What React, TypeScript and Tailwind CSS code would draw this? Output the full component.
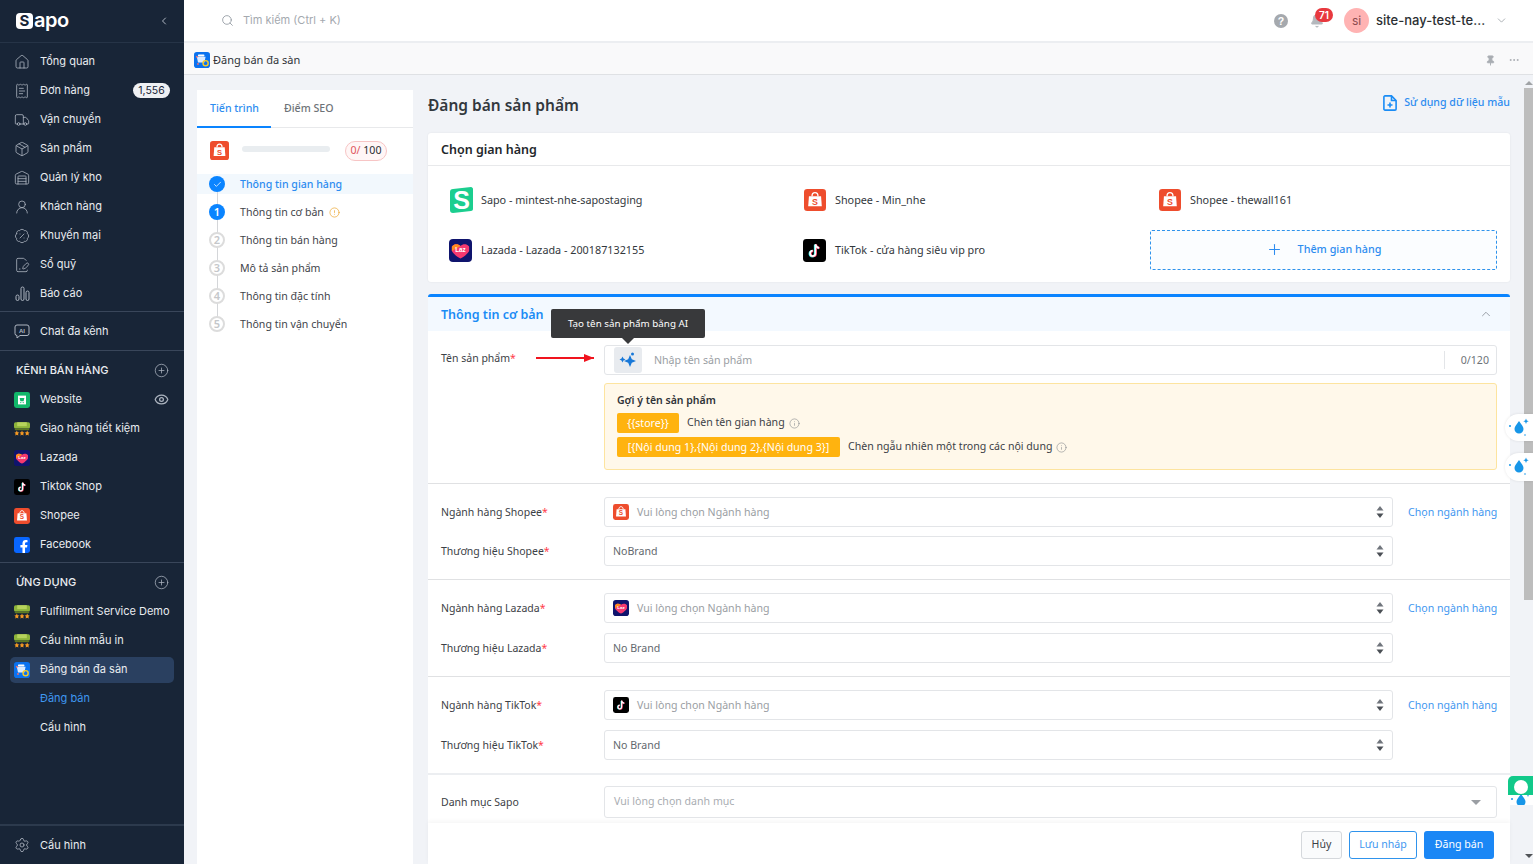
import React from "react";
import { Home, ReceiptText, Truck, Package, Warehouse, UserRound, BadgePercent, FilePenLine, CirclePlus, Eye, ChevronLeft, ChevronDown, ChevronUp, Search, Settings, Check, CircleAlert, Info, Plus, Pin, Ellipsis, Bell } from "lucide-react";

const Shopee = ({ s = 16 }: { s?: number }) => (
  <svg width={s} height={s} viewBox="0 0 20 20" className="shrink-0">
    <rect width="20" height="20" rx="3" fill="#ee4d2d" />
    <path d="M4.500 6.500h11l.7 9.200H3.800z" fill="#fff" />
    <path d="M7.300 6.500c0-4.200 5.400-4.200 5.400 0" fill="none" stroke="#fff" strokeWidth="1.200" />
    <text x="10" y="14.300" textAnchor="middle" fontSize="8" fontWeight="700" fill="#ee4d2d" fontFamily="Liberation Sans, sans-serif">S</text>
  </svg>
);
const Lazada = ({ s = 16 }: { s?: number }) => (
  <svg width={s} height={s} viewBox="0 0 20 20" className="shrink-0">
    <rect width="20" height="20" rx="3.500" fill="#0f146d" />
    <path d="M2.500 6.500C5 3.800 8 4.400 10 6c2-1.600 5-2.200 7.500.5v3.700c0 1.500-5 5.800-7.500 6.800-2.500-1-7.500-5.300-7.500-6.800z" fill="#f5386f" />
    <path d="M2.500 6.500C5 3.800 8 4.400 10 6l-7.500 4.500z" fill="#ff8a1e" />
    <text x="10" y="11.600" textAnchor="middle" fontSize="5.500" fontWeight="700" fill="#fff" fontFamily="Liberation Sans, sans-serif">Laz</text>
  </svg>
);
const TikTok = ({ s = 16 }: { s?: number }) => (
  <svg width={s} height={s} viewBox="0 0 20 20" className="shrink-0">
    <rect width="20" height="20" rx="3" fill="#000" />
    <path d="M10.800 4.500v8a2.300 2.300 0 1 1-2.300-2.300M10.800 4.500c.2 1.800 1.400 3 3.200 3.200" fill="none" stroke="#25f4ee" strokeWidth="1.700" transform="translate(-.5 .4)" />
    <path d="M10.800 4.500v8a2.300 2.300 0 1 1-2.300-2.300M10.800 4.500c.2 1.800 1.400 3 3.200 3.200" fill="none" stroke="#fe2c55" strokeWidth="1.700" transform="translate(.5 .2)" />
    <path d="M10.800 4.500v8a2.300 2.300 0 1 1-2.300-2.300M10.800 4.500c.2 1.800 1.400 3 3.200 3.200" fill="none" stroke="#fff" strokeWidth="1.500" />
  </svg>
);
const Facebook = () => (
  <svg width="16" height="16" viewBox="0 0 20 20" className="shrink-0">
    <rect width="20" height="20" rx="3" fill="#0866ff" />
    <path d="M13.800 20v-7h2.500l.5-3h-3V8.200c0-1 .5-1.700 1.800-1.700h1.300V4c-.7-.1-1.500-.2-2.300-.2-2.500 0-4 1.500-4 4.100V10H8v3h2.600v7z" fill="#fff" />
  </svg>
);
const WebsiteIc = () => (
  <svg width="16" height="16" viewBox="0 0 20 20" className="shrink-0">
    <rect width="20" height="20" rx="3" fill="#12b76a" />
    <path d="M5 4.500h10v11H5z" fill="#fff" />
    <path d="M7 7.500h6l-1 4H8z" fill="#12b76a" />
    <circle cx="8.500" cy="13.200" r=".8" fill="#12b76a" />
    <circle cx="11.500" cy="13.200" r=".8" fill="#12b76a" />
  </svg>
);
const Ghtk = () => (
  <svg width="16" height="14" viewBox="0 0 20 17" className="shrink-0">
    <rect x="0" y="0" width="20" height="8" rx="2" fill="#8db43a" />
    <rect x="4" y="0" width="12" height="5" fill="#b6d35c" />
    <rect x="1" y="8" width="18" height="2" fill="#5c7a22" />
    <path d="M3.500 10.500l1 2.200 2 .2-1.500 1.500.5 2.200-2-1-2 1 .5-2.200L.5 12.900l2-.2zM10 10.500l1 2.200 2 .2-1.500 1.500.5 2.200-2-1-2 1 .5-2.200-1.500-1.500 2-.2zM16.500 10.500l1 2.200 2 .2-1.500 1.500.5 2.200-2-1-2 1 .5-2.200-1.500-1.500 2-.2z" fill="#f59a23" />
  </svg>
);
const MultiIc = ({ s = 16 }: { s?: number }) => (
  <svg width={s} height={s} viewBox="0 0 20 20" className="shrink-0">
    <rect width="20" height="20" rx="3.500" fill="#0a72ef" />
    <path d="M3.500 6h11l-1.500 7H5z" fill="#dbeafe" />
    <rect x="5" y="3" width="8" height="2.500" rx=".8" fill="#fff" />
    <circle cx="3.500" cy="6" r="1.200" fill="#f06b6b" />
    <circle cx="5" cy="15" r="1.200" fill="#f06b6b" />
    <circle cx="14.500" cy="14" r="3.200" fill="none" stroke="#f7c927" strokeWidth="1.800" />
  </svg>
);
const SapoS = () => (
  <svg width="24" height="26" viewBox="0 0 24 26" className="shrink-0">
    <path d="M4 2 22 0c1 0 2 1 2 2v20c0 1-1 2-2 2L4 26c-2 0-3-1-3-3V5c0-2 1-3 3-3z" fill="#1bce8f" />
    <text x="12.500" y="21.500" textAnchor="middle" fontSize="25" fontWeight="700" fill="#fff" fontFamily="Liberation Sans, sans-serif">S</text>
  </svg>
);
const Bars = () => (
  <svg width="15" height="15" viewBox="0 0 15 15" fill="none" stroke="currentColor" strokeWidth="1">
    <rect x="1" y="9" width="3" height="5.500" rx="1.500" />
    <rect x="6" y="1" width="3" height="13.500" rx="1.500" />
    <rect x="11" y="5" width="3" height="9.500" rx="1.500" />
  </svg>
);
const AiChat = () => (
  <svg width="16" height="15" viewBox="0 0 16 15" fill="none" stroke="currentColor" strokeWidth="1">
    <path d="M3 1h10a2 2 0 0 1 2 2v6.500a2 2 0 0 1-2 2H6l-3 2.500v-2.500a2 2 0 0 1-2-2V3a2 2 0 0 1 2-2z" />
    <text x="8" y="8.800" textAnchor="middle" fontSize="6" fontWeight="700" fill="currentColor" stroke="none" fontFamily="Liberation Sans, sans-serif">AI</text>
  </svg>
);
const Help = () => (
  <svg width="14" height="14" viewBox="0 0 14 14" className="shrink-0">
    <circle cx="7" cy="7" r="7" fill="#a5a9ae" />
    <text x="7" y="10.800" textAnchor="middle" fontSize="10.500" fontWeight="700" fill="#fff" fontFamily="Liberation Sans, sans-serif">?</text>
  </svg>
);
const DocPlus = () => (
  <svg width="14" height="16" viewBox="0 0 14 16" fill="none" stroke="#1a8cf5" strokeWidth="1.600" className="mr-[7px] shrink-0">
    <path d="M2 .9h6.500l4.600 4.600V14a1.100 1.100 0 0 1-1.100 1.100H2A1.100 1.100 0 0 1 .9 14V2A1.100 1.100 0 0 1 2 .9z" />
    <path d="M8.500 1v4.500h4.500" />
    <path d="M7 7.500v5M4.500 10h5" />
  </svg>
);
const Drop = () => (
  <svg width="26" height="22" viewBox="0 0 26 22">
    <path d="M13 4c2.500 3.500 4.500 5.500 4.500 8a4.500 4.500 0 0 1-9 0c0-2.500 2-4.500 4.500-8z" fill="#1796e8" />
    <path d="M20 1.500l.8 1.900 1.900.8-1.900.8-.8 1.900-.8-1.900-1.900-.8 1.900-.8z" fill="#1796e8" />
    <circle cx="4" cy="9" r="1" fill="#1796e8" />
    <circle cx="19" cy="18" r=".8" fill="#1796e8" />
  </svg>
);
const Updown = () => (
  <svg width="8" height="14" viewBox="0 0 8 14" className="shrink-0">
    <path d="M4 1l3.500 4.500h-7z" fill="#70757c" />
    <path d="M4 13L.5 8.500h7z" fill="#4a4f55" />
  </svg>
);
const Req = () => <span className="text-[#ff3b4a]">*</span>;

const Nav = ({ icon, label, right, active, blue }: { icon?: React.ReactNode; label: string; right?: React.ReactNode; active?: boolean; blue?: boolean }) => (
  <div className="h-[29px] px-[10px] flex items-center">
    <div className={`flex-1 h-[26px] rounded-[5px] pl-[4px] pr-[4px] flex items-center gap-[10px] ${active ? "bg-[#2a4060]" : ""}`}>
      <span className="w-[16px] flex justify-center shrink-0 text-[#aeb6c1]">{icon}</span>
      <span className={`flex-1 whitespace-nowrap ${blue ? "text-[#3f97f0]" : "text-[#e9ecf0]"}`}>{label}</span>
      {right}
    </div>
  </div>
);
const ic = { size: 16, strokeWidth: 1.2 };

const SectionHead = ({ label }: { label: string }) => (
  <div className="h-[29px] pl-[16px] pr-[15px] flex items-center justify-between">
    <span className="font-medium text-[#e9ecf0]">{label}</span>
    <CirclePlus size={15} strokeWidth={1.2} className="text-[#aeb6c1]" />
  </div>
);

const Sidebar = () => (
  <aside className="w-[184px] h-full shrink-0 bg-[#182537] flex flex-col text-[11px] font-[Inter,sans-serif]">
    <div className="h-[43px] shrink-0 border-b border-[#263447] pl-[16px] pr-[14px] flex items-center justify-between">
      <div className="flex items-center">
        <span className="w-[17px] h-[16px] rounded-[4px] bg-white text-[#182537] text-[15px] font-bold leading-[16px] text-center">S</span>
        <span className="text-white text-[20px] font-semibold leading-none ml-[1px] tracking-[-0.5px] -mt-[2px]">apo</span>
      </div>
      <ChevronLeft size={12} strokeWidth={2} className="text-[#aeb6c1]" />
    </div>
    <div className="pt-[4px] pb-[3px] border-b border-[#39465a]">
      <Nav icon={<Home {...ic} />} label="Tổng quan" />
      <Nav icon={<ReceiptText {...ic} />} label="Đơn hàng" right={<span className="w-[37px] h-[15px] rounded-full bg-[#eef0f3] text-[#182537] text-[10.5px] leading-[15px] text-center">1,556</span>} />
      <Nav icon={<Truck {...ic} />} label="Vận chuyển" />
      <Nav icon={<Package {...ic} />} label="Sản phẩm" />
      <Nav icon={<Warehouse {...ic} />} label="Quản lý kho" />
      <Nav icon={<UserRound {...ic} />} label="Khách hàng" />
      <Nav icon={<BadgePercent {...ic} />} label="Khuyến mại" />
      <Nav icon={<FilePenLine {...ic} />} label="Sổ quỹ" />
      <Nav icon={<Bars />} label="Báo cáo" />
    </div>
    <div className="pt-[5px] pb-[4px] border-b border-[#39465a]">
      <Nav icon={<AiChat />} label="Chat đa kênh" />
    </div>
    <div className="pt-[5px] pb-[3px] border-b border-[#39465a]">
      <SectionHead label="KÊNH BÁN HÀNG" />
      <Nav icon={<WebsiteIc />} label="Website" right={<Eye size={15} strokeWidth={2} className="text-[#aeb6c1] mr-[1px]" />} />
      <Nav icon={<Ghtk />} label="Giao hàng tiết kiệm" />
      <Nav icon={<Lazada />} label="Lazada" />
      <Nav icon={<TikTok />} label="Tiktok Shop" />
      <Nav icon={<Shopee />} label="Shopee" />
      <Nav icon={<Facebook />} label="Facebook" />
    </div>
    <div className="pt-[5px] flex-1">
      <SectionHead label="ỨNG DỤNG" />
      <Nav icon={<Ghtk />} label="Fulfillment Service Demo" />
      <Nav icon={<Ghtk />} label="Cấu hình mẫu in" />
      <Nav icon={<MultiIc />} label="Đăng bán đa sàn" active />
      <Nav label="Đăng bán" blue />
      <Nav label="Cấu hình" />
    </div>
    <div className="h-[40px] shrink-0 border-t-2 border-[#2c3a4d] flex items-center">
      <div className="flex-1"><Nav icon={<Settings {...ic} />} label="Cấu hình" /></div>
    </div>
  </aside>
);

const TopBar = () => (
  <header className="h-[43px] shrink-0 bg-white border-b-2 border-[#eceef1] flex items-center pl-[37px] pr-[25px] font-[Inter,sans-serif]">
    <Search size={13} strokeWidth={1.5} className="text-[#8d949c]" />
    <span className="ml-[9px] text-[11px] text-[#a4a9af] flex-1">Tìm kiếm (Ctrl + K)</span>
    <Help />
    <div className="relative ml-[22px] mt-[1px]">
      <Bell size={14} className="text-[#b4b8bd] fill-[#b4b8bd]" />
      <span className="absolute -top-[6px] -right-[9px] w-[18px] h-[14px] rounded-full bg-[#e8393f] text-white text-[10px] font-semibold leading-[14px] text-center">71</span>
    </div>
    <span className="ml-[20px] w-[25px] h-[25px] rounded-full bg-[#ffb3b3] text-[#8b4a4f] text-[12px] leading-[25px] text-center">si</span>
    <span className="ml-[7px] pt-[1px] text-[13px] text-[#2b2f33] font-medium w-[119px]">site-nay-test-te...</span>
    <ChevronDown size={13} strokeWidth={1.5} className="text-[#9aa0a6]" />
  </header>
);

const Crumb = () => (
  <div className="h-[32px] shrink-0 bg-[#f9f9fa] border-b border-[#dfe1e4] pl-[10px] pr-[13px] pt-[3px] flex items-center">
    <MultiIc />
    <span className="ml-[3px] flex-1 text-[11px] text-[#2f3338]">Đăng bán đa sàn</span>
    <Pin size={11} strokeWidth={2} className="text-[#a9adb2] fill-[#a9adb2] mr-[12px]" />
    <Ellipsis size={12} strokeWidth={2} className="text-[#a9adb2]" />
  </div>
);

const Step = ({ n, label, state, warn, last }: { n: number; label: string; state: "done" | "cur" | "todo"; warn?: boolean; last?: boolean }) => (
  <div className="relative h-[28px] pl-[12px] flex items-center">
    {state === "done" && <div className="absolute left-0 right-0 top-[4px] h-[20px] bg-[#f2f8fd]" />}
    {!last && <div className="absolute left-[20px] top-[14px] h-[28px] w-[1px] bg-[#d4d6d9]" />}
    <span className={`relative w-[16px] h-[16px] rounded-full flex items-center justify-center text-[11px] font-semibold shrink-0 ${state === "todo" ? "bg-white border-2 border-[#dcdcdc] text-[#c5c7ca]" : "bg-[#0a84ff] text-white"}`}>
      {state === "done" ? <Check size={9} strokeWidth={2} /> : n}
    </span>
    <span className={`relative ml-[15px] pt-[2px] whitespace-nowrap ${state === "done" ? "text-[#2d8cf0] font-medium" : "text-[#3f444a]"}`}>{label}</span>
    {warn && <CircleAlert size={11} strokeWidth={1.5} className="relative ml-[5px] text-[#eba32a]" />}
  </div>
);

const Progress = () => (
  <section className="w-[216px] shrink-0 h-full bg-white text-[10.6px]">
    <div className="h-[38px] border-b border-[#e8e9eb] flex">
      <div className="w-[74px] h-[38px] pl-[13px] pt-[2px] flex items-center border-b-2 border-[#0a84ff] text-[#2d8cf0] font-medium">Tiến trình</div>
      <div className="pl-[13px] flex items-center text-[#6e7378] font-medium">Điểm SEO</div>
    </div>
    <div className="h-[42px] pl-[13px] pt-[3px] flex items-center">
      <Shopee s={19} />
      <div className="ml-[13px] w-[88px] h-[6px] rounded-full bg-[#e9edf0] -mt-[3px]" />
      <div className="ml-[15px] w-[42px] h-[20px] rounded-full bg-[#fff6f6] border border-[#f7c5c5] flex items-center justify-center text-[#2b2f33]">
        <span className="text-[#e0555b]">0/</span>&nbsp;100
      </div>
    </div>
    <div>
      <Step n={0} label="Thông tin gian hàng" state="done" />
      <Step n={1} label="Thông tin cơ bản" state="cur" warn />
      <Step n={2} label="Thông tin bán hàng" state="todo" />
      <Step n={3} label="Mô tả sản phẩm" state="todo" />
      <Step n={4} label="Thông tin đặc tính" state="todo" />
      <Step n={5} label="Thông tin vận chuyển" state="todo" last />
    </div>
  </section>
);

const Store = ({ icon, label }: { icon: React.ReactNode; label: string }) => (
  <div className="flex items-center gap-[9px] text-[#33383d] whitespace-nowrap">
    <span className="w-[23px] flex justify-center">{icon}</span>
    <span>{label}</span>
  </div>
);

const Stores = () => (
  <div className="bg-white rounded-[3px] shadow-[0_0_2px_rgba(0,0,0,0.08)]">
    <div className="h-[33px] pt-[2px] px-[13px] flex items-center border-b border-[#e8e9eb] text-[12.5px] font-semibold text-[#23272b]">Chọn gian hàng</div>
    <div className="pl-[21px] pt-[9px] pb-[7px] pr-[13px] grid grid-cols-[354px_355px_1fr] auto-rows-[50px] items-center text-[10.8px]">
      <Store icon={<SapoS />} label="Sapo - mintest-nhe-sapostaging" />
      <Store icon={<Shopee s={22} />} label="Shopee - Min_nhe" />
      <Store icon={<Shopee s={22} />} label="Shopee - thewall161" />
      <Store icon={<Lazada s={23} />} label="Lazada - Lazada - 200187132155" />
      <Store icon={<TikTok s={23} />} label="TikTok - cửa hàng siêu vip pro" />
      <div className="-ml-[8px] -mt-[1px] h-[40px] border border-dashed border-[#2f93ec] bg-[#fbfdff] rounded-[2px] flex items-center justify-center text-[#2d8cf0] font-medium">
        <Plus size={17} strokeWidth={1.5} className="mr-[15px]" />Thêm gian hàng
      </div>
    </div>
  </div>
);

const Select = ({ icon, placeholder, value }: { icon?: React.ReactNode; placeholder?: string; value?: string }) => (
  <div className="h-[30px] w-[789px] bg-white border border-[#e3e5e8] rounded-[3px] pl-[8px] pr-[8px] flex items-center">
    {icon && <span className="mr-[8px]">{icon}</span>}
    <span className={`flex-1 pt-[2px] ${value ? "text-[#62676d]" : "text-[#9a9ea3]"}`}>{value || placeholder}</span>
    <Updown />
  </div>
);

const Field = ({ label, children, link }: { label: React.ReactNode; children: React.ReactNode; link?: boolean }) => (
  <div className="flex items-center">
    <div className="w-[176px] pl-[13px] pt-[2px] shrink-0 text-[#3c4146] text-[10.5px]">{label}</div>
    {children}
    {link && <span className="ml-[15px] pt-[2px] text-[#3f97f0] whitespace-nowrap">Chọn ngành hàng</span>}
  </div>
);

const Group = ({ name, icon, brand, gap }: { name: string; icon: React.ReactNode; brand: string; gap: string }) => (
  <div className={`border-t border-[#e0e1e3] pt-[13px] pb-[13px] flex flex-col ${gap}`}>
    <Field label={<>Ngành hàng {name}<Req /></>} link>
      <Select icon={icon} placeholder="Vui lòng chọn Ngành hàng" />
    </Field>
    <Field label={<>Thương hiệu {name}<Req /></>}>
      <Select value={brand} />
    </Field>
  </div>
);

const Sparkle = () => (
  <svg width="18" height="16" viewBox="0 0 18 16">
    <path d="M11 3l1.800 4.200L17 9l-4.200 1.800L11 15l-1.800-4.200L5 9l4.200-1.800z" fill="#1878d8" />
    <path d="M3.500 4.500l1 2 2 1-2 1-1 2-1-2-2-1 2-1z" fill="#1878d8" />
    <circle cx="13.500" cy="2" r="1.500" fill="#1878d8" />
  </svg>
);

const Basic = () => (
  <div className="mt-[12px] bg-white rounded-t-[3px] border-t-[3px] border-[#0a84ff]">
    <div className="h-[34px] bg-[#f3f9ff] pl-[13px] pr-[17px] flex items-center justify-between">
      <span className="pt-[2px] text-[12.5px] font-semibold text-[#1a8cf5]">Thông tin cơ bản</span>
      <ChevronUp size={14} strokeWidth={1.5} className="text-[#8d949c]" />
    </div>
    <div className="relative pt-[14px] pb-[13px]">
      <div className="absolute left-[108px] top-[26px] w-[58px] h-[2px] bg-[#f0141e]">
        <span className="absolute right-0 -top-[3px] border-y-[4px] border-y-transparent border-l-[10px] border-l-[#f0141e]" />
      </div>
      <div className="flex items-start">
        <div className="w-[176px] pl-[13px] shrink-0 text-[#3c4146] text-[10.5px] pt-[6px]">Tên sản phẩm<Req /></div>
        <div className="w-[893px]">
          <div className="h-[30px] border border-[#e3e5e8] rounded-[3px] pl-[9px] pr-[7px] flex items-center">
            <span className="w-[28px] h-[26px] rounded-[3px] bg-[#e8ebef] flex items-center justify-center"><Sparkle /></span>
            <span className="ml-[12px] pt-[2px] flex-1 text-[#9a9ea3]">Nhập tên sản phẩm</span>
            <span className="border-l border-[#e3e5e8] pl-[16px] h-[18px] leading-[18px] text-[#6e7378]">0/120</span>
          </div>
          <div className="mt-[8px] h-[87px] bg-[#fff8ea] border border-[#fde49f] rounded-[3px] pl-[12px] pt-[8px] text-[#3c4146]">
            <div className="font-semibold text-[#2f3338] leading-[16px] text-[10.5px]">Gợi ý tên sản phẩm</div>
            <div className="mt-[5px] flex items-center h-[20px]">
              <span className="w-[62px] h-[20px] rounded-[2px] bg-[#ffb30f] text-white text-center leading-[20px]">{"{{store}}"}</span>
              <span className="ml-[8px]">Chèn tên gian hàng</span>
              <Info size={11} strokeWidth={1.2} className="ml-[4px] text-[#7b8086]" />
            </div>
            <div className="mt-[4px] flex items-center h-[20px]">
              <span className="w-[223px] h-[20px] rounded-[2px] bg-[#ffb30f] text-white text-center leading-[20px] whitespace-nowrap">{"[{Nội dung 1},{Nội dung 2},{Nội dung 3}]"}</span>
              <span className="ml-[8px]">Chèn ngẫu nhiên một trong các nội dung</span>
              <Info size={11} strokeWidth={1.2} className="ml-[4px] text-[#7b8086]" />
            </div>
          </div>
        </div>
      </div>
    </div>
    <Group name="Shopee" icon={<Shopee />} brand="NoBrand" gap="gap-[9px]" />
    <Group name="Lazada" icon={<Lazada />} brand="No Brand" gap="gap-[10px]" />
    <Group name="TikTok" icon={<TikTok />} brand="No Brand" gap="gap-[10px]" />
    <div className="border-t-[2px] border-[#eceef1] pt-[11px] pb-[20px] flex items-center">
      <div className="w-[176px] pl-[13px] pt-[2px] shrink-0 text-[#3c4146] text-[10.5px]">Danh mục Sapo</div>
      <div className="w-[893px] h-[32px] border border-[#e3e5e8] rounded-[3px] pl-[9px] pr-[15px] flex items-center justify-between text-[#a9adb2]">
        Vui lòng chọn danh mục
        <span className="border-x-[5px] border-x-transparent border-t-[5px] border-t-[#9a9ea3]" />
      </div>
    </div>
  </div>
);

const Tooltip = () => (
  <div className="absolute left-[367px] top-[234px] w-[154px] h-[29px] rounded-[2px] bg-[#38393b] text-white text-[9.8px] leading-[30px] text-center">
    Tạo tên sản phẩm bằng AI
    <span className="absolute left-[71px] top-[29px] border-x-[6px] border-x-transparent border-t-[6px] border-t-[#38393b]" />
  </div>
);

const ActionBar = () => (
  <div className="absolute left-[244px] top-[748px] w-[1082px] h-[41px] bg-white shadow-[0_-2px_4px_rgba(0,0,0,0.04)] pr-[16px] pt-[2px] flex items-center justify-end gap-[7px]">
    <span className="w-[41px] h-[28px] rounded-[3px] border border-[#d5d8dc] bg-[#fafbfc] text-[#3c4146] flex items-center justify-center">Hủy</span>
    <span className="w-[68px] h-[28px] rounded-[3px] border border-[#2f93ec] text-[#3f97f0] flex items-center justify-center">Lưu nháp</span>
    <span className="w-[70px] h-[28px] rounded-[3px] bg-[#1b87f5] text-white flex items-center justify-center">Đăng bán</span>
  </div>
);

const Floats = () => (
  <>
    <div className="absolute left-[1321px] top-[339px] w-[28px] h-[27px] bg-white rounded-l-full flex items-center justify-center shadow-[0_0_3px_rgba(0,0,0,0.1)]"><Drop /></div>
    <div className="absolute left-[1321px] top-[378px] w-[28px] h-[28px] bg-white rounded-l-full flex items-center justify-center shadow-[0_0_3px_rgba(0,0,0,0.1)]"><Drop /></div>
    <div className="absolute left-[1324px] top-[701px] w-[25px] h-[29px] overflow-hidden rounded-tl-[5px]">
      <div className="h-[19px] bg-[#12c98a] flex justify-center pt-[4px]"><span className="w-[14px] h-[14px] rounded-full bg-white" /></div>
      <div className="h-[10px] bg-white flex justify-center overflow-hidden"><div className="-mt-[5px]"><Drop /></div></div>
    </div>
  </>
);

const Scrollbar = () => (
  <div className="w-[9px] h-full shrink-0 ml-[14px] bg-[#f1f3f7] flex flex-col items-center">
    <span className="mt-[6px] border-x-[4px] border-x-transparent border-b-[4px] border-b-[#a0a3a6]" />
    <div className="mt-[3px] w-full h-[512px] bg-[#bdbdbd]" />
    <div className="flex-1" />
    <span className="mb-[6px] border-x-[4px] border-x-transparent border-t-[4px] border-t-[#505357]" />
  </div>
);

export default function App() {
  return (
    <div className="w-[1533px] h-[864px] overflow-hidden flex font-['Noto_Sans',sans-serif] text-[10.6px]">
      <Sidebar />
      <div className="flex-1 flex flex-col min-w-0">
        <TopBar />
        <Crumb />
        <main className="relative flex-1 min-h-0 bg-[#f1f3f7] overflow-hidden flex">
          <div className="pl-[13px] pt-[15px] flex gap-[15px] min-h-0 h-full">
            <Progress />
            <div className="w-[1082px] shrink-0">
              <div className="h-[43px] pb-[12px] flex items-center justify-between">
                <h1 className="text-[15.5px] font-semibold text-[#33383d]">Đăng bán sản phẩm</h1>
                <div className="flex items-center -mt-[5px] text-[#2d8cf0] font-medium">
                  <DocPlus />Sử dụng dữ liệu mẫu
                </div>
              </div>
              <Stores />
              <Basic />
            </div>
          </div>
          <Scrollbar />
          <Tooltip />
          <ActionBar />
          <Floats />
        </main>
      </div>
    </div>
  );
}
